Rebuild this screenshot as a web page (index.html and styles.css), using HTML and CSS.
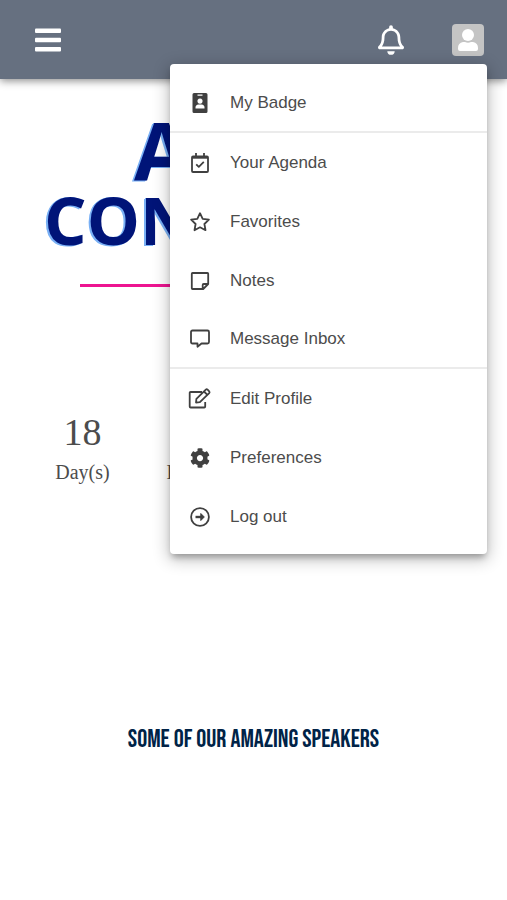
FILE: index.html
```html
<!DOCTYPE html>
<html lang="en">
<head>
<meta charset="utf-8">
<meta name="viewport" content="width=device-width, initial-scale=1">
<title>Conference</title>
<link rel="stylesheet" href="styles.css">
</head>
<body>
<header class="topbar">
  <button class="icon-button" type="button" aria-label="Open navigation">
    <svg width="26" height="24" viewBox="0 0 26 24" fill="#fff"><rect y=".5" width="26" height="4.500" rx="1"/><rect y="9.800" width="26" height="4.500" rx="1"/><rect y="19" width="26" height="4.500" rx="1"/></svg>
  </button>
  <div class="actions">
    <button class="icon-button" type="button" aria-label="Notifications">
      <svg width="26" height="30" viewBox="0 0 448 512" fill="#fff"><path d="M439.400 362.300c-19.300-20.800-55.500-52-55.500-154.300 0-77.700-54.500-139.900-127.900-155.200V32a32 32 0 1 0-64 0v20.800C118.600 68.100 64.100 130.300 64.100 208c0 102.300-36.200 133.500-55.500 154.300C2.600 368.700 0 376.400 0 384c.1 16.400 13 32 32.100 32h383.800c19.100 0 32-15.600 32.100-32 0-7.600-2.600-15.300-8.600-21.700zM67.500 368c21.200-27.900 44.400-74.300 44.500-159.400V208c0-61.900 50.100-112 112-112s112 50.100 112 112v.6c.1 85.100 23.300 131.500 44.500 159.400zM224 512c35.300 0 64-28.700 64-64H160c0 35.300 28.600 64 64 64z"/></svg>
    </button>
    <button class="icon-button" type="button" aria-label="Account menu" aria-expanded="true">
      <svg width="32" height="32" viewBox="0 0 32 32"><rect width="32" height="32" rx="4" fill="#c4c4c4"/><circle cx="16" cy="11" r="6" fill="#fff"/><path d="M11 18h2q3 1.500 6 0h2q5 1 5 6v1q0 2-2 2H8q-2 0-2-2v-1q0-5 5-6z" fill="#fff"/></svg>
    </button>
  </div>
  <nav class="menu" aria-label="Account">
    <a class="item divided" href="#"><svg class="icon" viewBox="0 0 20 20"><path fill="currentColor" fill-rule="evenodd" d="M4 0h12q1.500 0 1.500 1.500v17q0 1.500-1.500 1.500H4q-1.500 0-1.500-1.500v-17Q2.500 0 4 0zM7.500 1.500v1.300h5V1.500zM10 5.500a2.600 2.600 0 1 0 .01 0zM5.500 14.500v1h9v-1q0-2.700-3-3h-3q-3 .3-3 3z"/></svg>My Badge</a>
    <a class="item" href="#"><svg class="icon line" viewBox="0 0 20 20"><rect x="2" y="3.500" width="16" height="15.500" rx="1"/><path d="M2 4.500h16" stroke-width="2.400"/><path d="M6 0v4M14 0v4M6.200 11.300l2.600 2.600 5-5"/></svg>Your Agenda</a>
    <a class="item" href="#"><svg class="icon line" viewBox="0 0 20 20"><path d="M10 1.200l2.700 5.600 6.200.9-4.500 4.300 1.100 6.200-5.500-2.900-5.500 2.900 1.100-6.200-4.500-4.300 6.200-.9z"/></svg>Favorites</a>
    <a class="item" href="#"><svg class="icon line" viewBox="0 0 20 20"><path d="M2.500 2h15q.7 0 .7.700v10.300l-5 5H2.500q-.7 0-.7-.7V2.700q0-.7.7-.7zM12.700 18v-4q0-1 1-1h4.500"/></svg>Notes</a>
    <a class="item divided" href="#"><svg class="icon line" viewBox="0 0 20 20"><path d="M2.500 1.500h15q1.500 0 1.500 1.500v10q0 1.500-1.500 1.500H11.500L7.500 17.800v-3.300h-5Q1 14.500 1 13V3q0-1.500 1.500-1.500z"/></svg>Message Inbox</a>
    <a class="item" href="#"><svg class="icon line" viewBox="0 0 20 20"><path d="M12 3H.700q-1 0-1 1v13.500q0 1 1 1h13.500q1 0 1-1v-4.500M6 13.500l.4-3.600 9.400-9.200q.9-.8 1.800 0l1.600 1.600q.8.900 0 1.800l-9.300 9.100zM14 2.500l3.400 3.400"/></svg>Edit Profile</a>
    <a class="item" href="#"><svg class="icon" viewBox="0 0 512 512"><path fill="currentColor" d="M487.400 315.700l-42.600-24.600c4.300-23.200 4.300-47 0-70.200l42.600-24.600c4.900-2.800 7.100-8.600 5.500-14-11.100-35.600-30-67.800-54.700-94.600-3.800-4.100-10-5.100-14.800-2.300L380.800 110c-17.900-15.400-38.500-27.300-60.800-35.100V25.800c0-5.600-3.900-10.500-9.400-11.700-36.700-8.200-74.300-7.800-109.200 0-5.500 1.200-9.400 6.100-9.400 11.700V75c-22.200 7.900-42.800 19.800-60.800 35.100L88.700 85.500c-4.900-2.800-11-1.900-14.800 2.300-24.700 26.700-43.600 58.900-54.700 94.600-1.700 5.400.6 11.200 5.500 14L67.300 221c-4.300 23.200-4.300 47 0 70.200l-42.600 24.600c-4.900 2.800-7.100 8.600-5.500 14 11.100 35.600 30 67.800 54.700 94.600 3.800 4.100 10 5.100 14.800 2.300l42.600-24.600c17.900 15.400 38.500 27.300 60.800 35.100v49.200c0 5.600 3.900 10.500 9.400 11.700 36.700 8.200 74.300 7.800 109.200 0 5.500-1.200 9.400-6.100 9.400-11.700v-49.200c22.200-7.900 42.800-19.800 60.800-35.100l42.600 24.600c4.900 2.800 11 1.900 14.800-2.300 24.700-26.700 43.600-58.900 54.700-94.600 1.500-5.500-.7-11.300-5.600-14.100zM256 336c-44.100 0-80-35.900-80-80s35.900-80 80-80 80 35.900 80 80-35.900 80-80 80z"/></svg>Preferences</a>
    <a class="item" href="#"><svg class="icon line" viewBox="0 0 20 20"><circle cx="10" cy="10" r="8.900"/><path d="M5.500 10h7" stroke-width="2.400"/><path d="M10.800 6.500l3.500 3.500-3.500 3.500z" fill="currentColor" stroke-width="1"/></svg>Log out</a>
  </nav>
</header>
<main>
  <h1 class="title"><span class="lead">A</span><span class="word">CON</span></h1>
  <hr class="rule">
  <section class="countdown" aria-label="Countdown">
    <div class="unit"><span class="count">18</span><span>Day(s)</span></div>
    <div class="unit"><span>Hour(s)</span></div>
  </section>
  <h2 class="speakers">SOME OF OUR AMAZING SPEAKERS</h2>
</main>
</body>
</html>
```
FILE: styles.css
```css
* { box-sizing: border-box; }
body {
  margin: 0;
  background: #fff;
  font-family: "Liberation Sans", Arial, sans-serif;
}
.topbar {
  position: relative;
  display: flex;
  align-items: center;
  justify-content: space-between;
  height: 79px;
  padding: 0 23px 0 35px;
  background: #667080;
  box-shadow: 0 2px 8px rgba(0, 0, 0, 0.45);
}
.actions { display: flex; align-items: center; gap: 48px; }
.icon-button {
  display: flex;
  padding: 0;
  border: 0;
  background: none;
}
.menu {
  position: absolute;
  z-index: 2;
  top: 64px;
  right: 20px;
  width: 317px;
  padding: 10px 0 8px;
  border-radius: 4px;
  background: #fff;
  box-shadow: 0 5px 6px -2px rgba(0, 0, 0, 0.28), 0 4px 16px 2px rgba(0, 0, 0, 0.24);
}
.item {
  display: flex;
  align-items: center;
  gap: 20px;
  height: 59px;
  padding: 0 20px;
  color: #4c4c4c;
  font-size: 17px;
  text-decoration: none;
}
.divided { border-bottom: 2px solid #ebebeb; }
.icon {
  width: 20px;
  height: 20px;
  color: #404040;
  overflow: visible;
}
.line {
  fill: none;
  stroke: currentColor;
  stroke-width: 1.8px;
  stroke-linejoin: round;
}
.title {
  display: flex;
  flex-direction: column;
  margin: 34px 0 0;
  padding-left: 44px;
  color: #001478;
  font-family: "Open Sans", "Noto Sans", sans-serif;
  font-weight: 700;
  text-shadow: -1px 0 #79b0f5, -2px 1px #79b0f5;
}
.lead { padding-left: 90px; font-size: 80px; line-height: 74px; }
.word { font-size: 67px; line-height: 64px; }
.rule {
  height: 3px;
  margin: 33px 80px 0;
  border: 0;
  background: #ed1490;
}
.countdown {
  display: grid;
  grid-template-columns: repeat(4, 1fr);
  align-items: end;
  margin: 120px 22px 0 25px;
  color: #4c4c4c;
  font-family: "Liberation Serif", "Times New Roman", serif;
  font-size: 20px;
  line-height: 30px;
}
.unit { display: flex; flex-direction: column; align-items: center; }
.count { font-size: 38px; line-height: 50px; }
.speakers {
  margin: 237px 0 0;
  color: #002347;
  font-family: "Bebas Neue", "Liberation Sans Narrow", "Liberation Sans", sans-serif;
  font-size: 25px;
  font-weight: 400;
  line-height: 32px;
  text-align: center;
}
```
